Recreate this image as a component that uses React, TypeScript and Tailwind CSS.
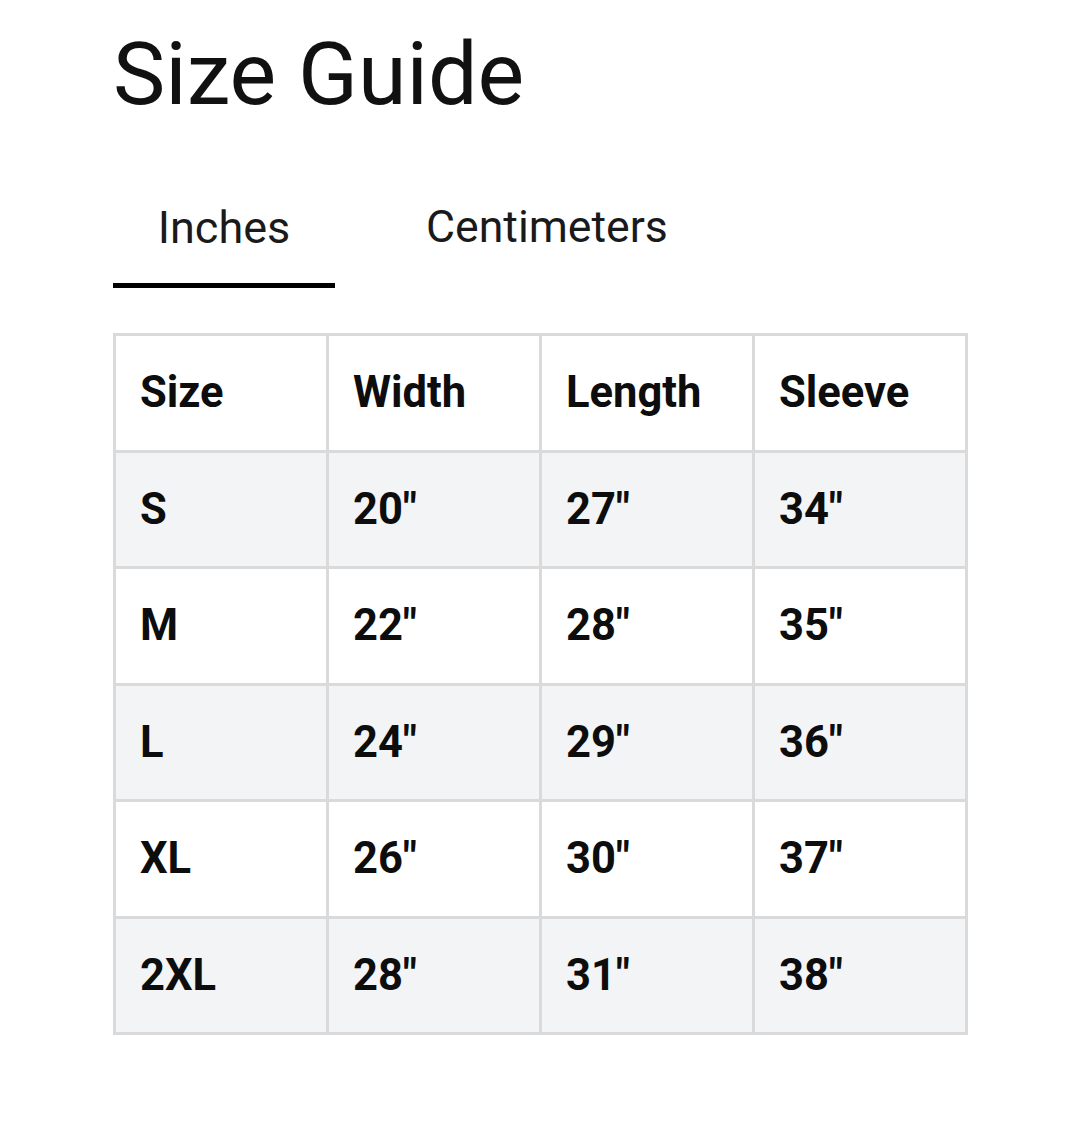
import React from "react";

const headers = ["Size", "Width", "Length", "Sleeve"];

const rows = [
  ["S", "20\"", "27\"", "34\""],
  ["M", "22\"", "28\"", "35\""],
  ["L", "24\"", "29\"", "36\""],
  ["XL", "26\"", "30\"", "37\""],
  ["2XL", "28\"", "31\"", "38\""]
];

const Cell = ({ text, shaded }: { text: string; shaded?: boolean }) => (
  <div
    className={`h-[113.5px] flex items-center pl-[24px] text-[43.5px] font-bold text-[#0d0d0d] ${
      shaded ? "bg-[#f2f4f5]" : "bg-white"
    }`}
  >
    {text}
  </div>
);

const App = () => {
  return (
    <section
      className="min-h-screen bg-white pl-[113px] pt-[30px] pb-[87px]"
      style={{ fontFamily: "Roboto, 'Noto Sans', sans-serif" }}
    >
      <h1 className="text-[88px] leading-none font-normal text-[#111]">Size Guide</h1>

      <div className="flex items-end gap-[46px] mt-[87px]">
        <div className="flex flex-col items-center w-[222px]">
          <p className="text-[45px] leading-none text-[#1a1a1a]">Inches</p>
          <div className="w-full h-[5px] bg-black mt-[33px]" />
        </div>
        <div className="flex flex-col items-center px-[45px]">
          <p className="text-[44.6px] leading-none text-[#1a1a1a]">Centimeters</p>
          <div className="w-full h-[5px] mt-[33px]" />
        </div>
      </div>

      <div className="mt-[45px] w-[855px] grid grid-cols-4 gap-[3px] p-[3px] bg-[#dadada]">
        {headers.map((h) => (
          <Cell key={h} text={h} />
        ))}
        {rows.map((row, i) =>
          row.map((v, j) => <Cell key={`${i}-${j}`} text={v} shaded={i % 2 === 0} />)
        )}
      </div>
    </section>
  );
};

export default App;
